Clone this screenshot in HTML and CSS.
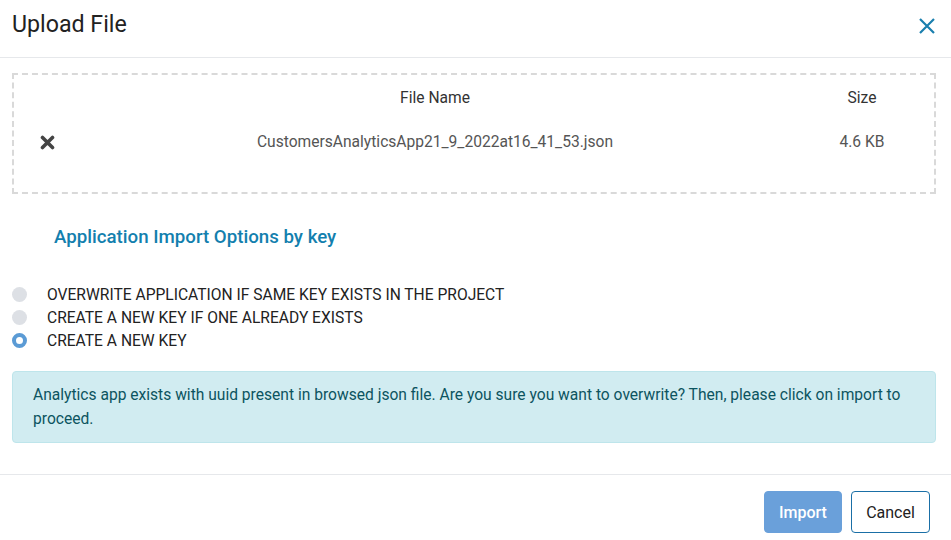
FILE: index.html
```html
<!DOCTYPE html>
<html>
<head>
<meta charset="utf-8">
<link rel="stylesheet" href="styles.css">
</head>
<body>
<div class="modal">
  <div class="modal-header">
    <h1 class="title">Upload File</h1>
    <button class="close" aria-label="Close">
      <svg width="18" height="18" viewBox="0 0 18 18"><path d="M2 2 L16 16 M16 2 L2 16" stroke="#1a7fae" stroke-width="2.2" fill="none"/></svg>
    </button>
  </div>
  <div class="modal-body">
    <div class="dropzone">
      <div class="cell head"></div>
      <div class="cell head name">File Name</div>
      <div class="cell head size">Size</div>
      <div class="cell icon">
        <svg width="15" height="15" viewBox="0 0 15 15"><path d="M2.5 2.5 L12.5 12.5 M12.5 2.5 L2.5 12.5" stroke="#444" stroke-width="3.6" stroke-linecap="round" fill="none"/></svg>
      </div>
      <div class="cell name file">CustomersAnalyticsApp21_9_2022at16_41_53.json</div>
      <div class="cell size file">4.6 KB</div>
    </div>
    <h2 class="section-title">Application Import Options by key</h2>
    <div class="options">
      <label class="option"><span class="radio"></span><span>OVERWRITE APPLICATION IF SAME KEY EXISTS IN THE PROJECT</span></label>
      <label class="option"><span class="radio"></span><span>CREATE A NEW KEY IF ONE ALREADY EXISTS</span></label>
      <label class="option"><span class="radio checked"></span><span>CREATE A NEW KEY</span></label>
    </div>
    <div class="alert">Analytics app exists with uuid present in browsed json file. Are you sure you want to overwrite? Then, please click on import to proceed.</div>
  </div>
  <div class="modal-footer">
    <button class="btn btn-primary">Import</button>
    <button class="btn btn-outline">Cancel</button>
  </div>
</div>
</body>
</html>
```

FILE: styles.css
```css
html, body {
  margin: 0;
  padding: 0;
  background: #fff;
}
body {
  font-family: Roboto, "Liberation Sans", Arial, sans-serif;
  color: #222;
}
.modal {
  width: 951px;
  height: 540px;
  display: flex;
  flex-direction: column;
}
.modal-header {
  height: 58px;
  box-sizing: border-box;
  border-bottom: 1px solid #e6e8eb;
  display: flex;
  align-items: flex-start;
  justify-content: space-between;
  padding: 10px 15px 0 12px;
}
.title {
  margin: 0;
  font-size: 23.2px;
  font-weight: 400;
  line-height: 28px;
  color: #222;
}
.close {
  border: 0;
  background: none;
  padding: 0;
  margin-top: 7px;
  margin-right: 0;
  cursor: pointer;
  line-height: 0;
}
.modal-body {
  padding: 15px 15px 0 12px;
  flex: 1;
}
.dropzone {
  border: 2px dashed #d9d9d9;
  display: grid;
  grid-template-columns: 66px 1fr 144px;
  grid-auto-rows: 24px;
  row-gap: 20px;
  padding: 11px 0 0;
  height: 121px;
  box-sizing: border-box;
  align-content: start;
}
.cell {
  font-size: 15.6px;
  line-height: 24px;
  text-align: center;
}
.head {
  color: #333;
}
.file {
  color: #555;
}
.icon {
  display: flex;
  align-items: center;
  justify-content: center;
}
.section-title {
  margin: 31px 0 0 42px;
  font-size: 18.7px;
  font-weight: 500;
  line-height: 24px;
  color: #137fae;
}
.options {
  margin-top: 34px;
  display: flex;
  flex-direction: column;
}
.option {
  display: flex;
  align-items: center;
  height: 23px;
  font-size: 15.6px;
  color: #222;
}
.radio {
  width: 15px;
  height: 15px;
  border-radius: 50%;
  background: #dde0e5;
  margin: 0 20px 0 0;
  box-sizing: border-box;
  flex: none;
}
.radio.checked {
  background: #fff;
  border: 4.5px solid #5b9bd5;
}
.alert {
  margin-top: 18.5px;
  background: #d1ecf1;
  border: 1px solid #bee5eb;
  border-radius: 4px;
  color: #0c5460;
  font-size: 15.6px;
  line-height: 24px;
  padding: 11px 20px;
}
.modal-footer {
  border-top: 1px solid #e6e8eb;
  height: 66px;
  box-sizing: border-box;
  display: flex;
  justify-content: flex-end;
  align-items: flex-start;
  padding: 16px 21px 0 0;
  gap: 9px;
}
.btn {
  height: 42px;
  font-family: inherit;
  font-size: 16px;
  border-radius: 4px;
  padding: 0 10px;
  cursor: pointer;
}
.btn-primary {
  background: #6aa0da;
  border: 1px solid #6aa0da;
  color: #fff;
  font-weight: 500;
  width: 78px;
}
.btn-outline {
  background: #fff;
  border: 1px solid #1a6fa6;
  color: #222;
  width: 79px;
}
```
